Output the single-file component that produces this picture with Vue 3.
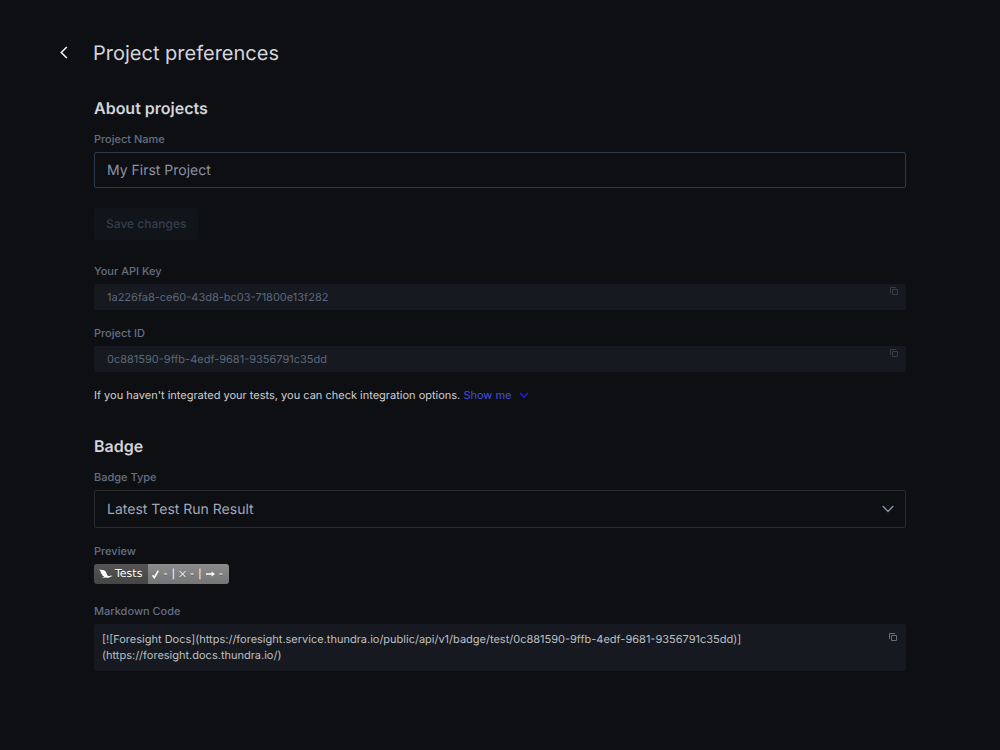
<script setup>
import { ref, computed } from 'vue'

const savedName = ref('My First Project')
const projectName = ref('My First Project')
const unchanged = computed(() => projectName.value === savedName.value)
const badgeType = ref('Latest Test Run Result')
const keys = [
  { id: 'api-key', label: 'Your API Key', value: '1a226fa8-ce60-43d8-bc03-71800e13f282' },
  { id: 'project-id', label: 'Project ID', value: '0c881590-9ffb-4edf-9681-9356791c35dd' },
]
const save = () => { savedName.value = projectName.value }
const copy = (text) => navigator.clipboard?.writeText(text)
const markdown = '[![Foresight Docs](https://foresight.service.thundra.io/public/api/v1/badge/test/0c881590-9ffb-4edf-9681-9356791c35dd)](https://foresight.docs.thundra.io/)'
</script>

<template>
  <main class="page">
    <header class="top">
      <button class="back" type="button" aria-label="Back">
        <svg width="8" height="14" viewBox="0 0 8 14"><path d="M6.800 1 1.300 6.500l5.500 5.500" /></svg>
      </button>
      <h1>Project preferences</h1>
    </header>

    <form class="section" @submit.prevent="save">
      <h2>About projects</h2>
      <label class="label" for="project-name">Project Name</label>
      <input id="project-name" v-model="projectName" class="name" type="text" />
      <button class="save" type="submit" :disabled="unchanged">Save changes</button>

      <div v-for="k in keys" :key="k.id" class="field">
        <label class="label" :for="k.id">{{ k.label }}</label>
        <div class="keybox">
          <input :id="k.id" type="text" readonly :value="k.value" />
          <button class="copy dim" type="button" aria-label="Copy" @click="copy(k.value)">
            <svg width="8" height="8" viewBox="0 0 8 8"><path d="M.5 6V.5H6" /><path d="M2.5 2.5h5v5h-5z" /></svg>
          </button>
        </div>
      </div>

      <p class="hint">
        If you haven't integrated your tests, you can check integration options.
        <a href="#integration">Show me<svg width="10" height="7" viewBox="0 0 10 7"><path d="m1 1 4 4 4-4" /></svg></a>
      </p>
    </form>

    <section class="section badge-section">
      <h2>Badge</h2>
      <label class="label" for="badge-type">Badge Type</label>
      <div class="select">
        <select id="badge-type" v-model="badgeType">
          <option>Latest Test Run Result</option>
        </select>
        <svg width="12" height="8" viewBox="0 0 12 8"><path d="m.7 1 5.3 5.4L11.3 1" /></svg>
      </div>

      <div class="field preview">
        <span class="label">Preview</span>
        <div class="badge">
          <span class="badge-name">
            <svg width="14" height="10" viewBox="0 0 14 10"><path d="M0 .6C2.500 1.200 4.800.900 6.200 2.100 7.800 3.500 7.300 5.400 8.800 6.700c1 .8 2 .3 2.800-.3l2.200.6-1.800.5C10.600 8.600 8.400 9 6.300 8.500L3 8.900l2.200-1.200C3.600 7 3 6 3 5L1.500 4.300l1-.4L1 2.700l1-.2z" /></svg>
            Tests
          </span>
          <span class="badge-result">
            <svg class="tick" width="7" height="9" viewBox="0 0 7 9"><path d="m.6 5.300 1.700 2.400L6.300.7" /></svg>
            <span>-</span><span>|</span>
            <svg class="cross" width="7" height="8" viewBox="0 0 7 8"><path d="m.6 1 6 6M6.600 1l-6 6" /></svg>
            <span>-</span><span>|</span>
            <svg class="arrow" width="9" height="6" viewBox="0 0 9 6"><path d="M0 2.200h5.500V.5L9 3 5.500 5.500V3.800H0z" /></svg>
            <span>-</span>
          </span>
        </div>
      </div>

      <div class="field markdown">
        <span class="label">Markdown Code</span>
        <div class="code">
          <code>{{ markdown.split('](https://foresight.docs')[0] }}]<wbr />(https://foresight.docs.thundra.io/)</code>
          <button class="copy" type="button" aria-label="Copy markdown" @click="copy(markdown)">
            <svg width="8" height="8" viewBox="0 0 8 8"><path d="M.5 6V.5H6" /><path d="M2.5 2.5h5v5h-5z" /></svg>
          </button>
        </div>
      </div>
    </section>
  </main>
</template>

<style>
html, body { background: #0e0f13; }
</style>

<style scoped>
* { box-sizing: border-box; }
.page {
  min-height: 100vh;
  padding: 37px 94px;
  background: #0e0f13;
  color: #d3d4dc;
  font: 11px/16px Inter, sans-serif;
  text-rendering: geometricPrecision;
}
button, input, select { font: inherit; color: inherit; margin: 0; text-rendering: inherit; }
button { border: 0; padding: 0; background: none; cursor: pointer; }
svg { display: block; fill: none; stroke: currentColor; flex: none; }
h1, h2, p { margin: 0; }
.top { display: flex; align-items: center; gap: 25px; margin-left: -34px; }
.back { color: #f2f2f5; }
.back svg { stroke-width: 1.6; }
h1 { font-size: 20px; line-height: 32px; font-weight: 400; }
h2 { font-size: 16px; line-height: 24px; font-weight: 600; margin-bottom: 11px; }
.section { display: flex; flex-direction: column; margin-top: 27px; }
.badge-section { margin-top: 31px; }
.label { color: #647083; font-weight: 500; margin-bottom: 5px; }
.name {
  width: 100%;
  height: 36px;
  padding: 0 12px;
  border: 1px solid #2b3a4b;
  border-radius: 2px;
  background: transparent;
  color: #8a92a4;
  font-size: 14px;
  outline: none;
}
.save {
  align-self: flex-start;
  height: 32px;
  margin: 20px 0 8px;
  padding: 0 12px;
  border-radius: 2px;
  background: #111418;
  color: #343e4e;
  font-size: 12px;
  font-weight: 500;
}
.field { display: flex; flex-direction: column; margin-top: 15px; }
.keybox {
  display: flex;
  justify-content: space-between;
  align-items: flex-start;
  height: 26px;
  padding: 0 8px 0 13px;
  border-radius: 2px;
  background: #161920;
}
.keybox input {
  flex: 1;
  height: 26px;
  padding: 0;
  border: 0;
  background: none;
  color: #5d687a;
  outline: none;
}
.copy { color: #626e80; }
.copy.dim { color: #343d49; margin-top: 3px; }
.hint { margin-top: 15px; color: #cfcfd1; }
.hint a { color: #3f51e0; text-decoration: none; }
.hint svg { display: inline-block; margin-left: 7px; color: #1c22dc; stroke-width: 1.6; }
.select { position: relative; color: #8a92a4; }
.select select {
  display: block;
  width: 100%;
  height: 38px;
  padding: 2px 36px 0 12px;
  border: 1px solid #292a2f;
  border-radius: 2px;
  background: transparent;
  color: #a0a6b8;
  font-size: 14px;
  appearance: none;
  outline: none;
}
.select svg { position: absolute; right: 12px; top: 15px; stroke-width: 1.4; pointer-events: none; }
.badge {
  display: flex;
  align-self: flex-start;
  height: 20px;
  border-radius: 3px;
  overflow: hidden;
  color: #fff;
  font: 11px/20px "DejaVu Sans", sans-serif;
  text-shadow: 0 1px 0 #0106;
}
.badge-name { display: flex; align-items: center; gap: 2px; padding: 0 6px 0 5px; background: linear-gradient(#555, #454545); }
.badge-name svg { fill: #fff; stroke: none; }
.badge-result { display: flex; align-items: center; gap: 4px; padding: 0 6px 0 4px; background: linear-gradient(#8c8c8c, #757575); }
.tick { stroke-width: 1.6; }
.arrow { fill: #fff; stroke: none; }
.markdown { margin-top: 19px; }
.code {
  display: flex;
  justify-content: space-between;
  align-items: flex-start;
  gap: 24px;
  padding: 7px 9px 8px 8px;
  border-radius: 2px;
  background: #161920;
  color: #bfc0c3;
}
.code code { font-family: inherit; max-width: 680px; }
.code .copy { margin-top: 2px; }
</style>
